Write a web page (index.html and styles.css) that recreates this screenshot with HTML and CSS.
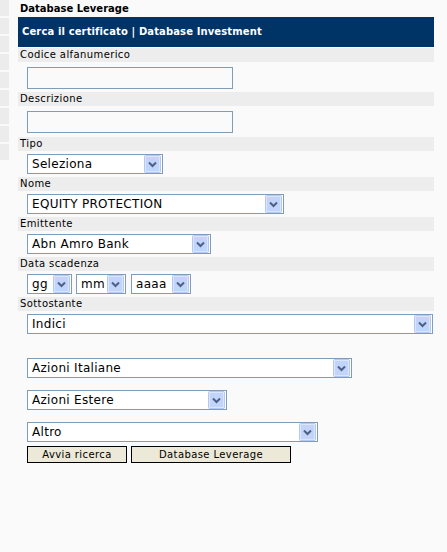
FILE: index.html
```html
<!DOCTYPE html>
<html>
<head>
<meta charset="utf-8">
<link rel="stylesheet" href="styles.css">
</head>
<body>
<div class="page">
  <div class="side">
    <div class="side-item"></div><div class="side-item"></div><div class="side-item"></div>
    <div class="side-item"></div><div class="side-item"></div><div class="side-item"></div>
    <div class="side-item"></div><div class="side-item"></div><div class="side-item"></div>
  </div>
  <div class="main">
    <div class="title">Database Leverage</div>
    <div class="header">Cerca il certificato | Database Investment</div>

    <div class="band">Codice alfanumerico</div>
    <div class="ctl ctl-input"><div class="input"></div></div>

    <div class="band">Descrizione</div>
    <div class="ctl ctl-input2"><div class="input"></div></div>

    <div class="band">Tipo</div>
    <div class="ctl"><div class="select w-tipo"><span>Seleziona</span><svg class="arrow" width="17" height="18" viewBox="0 0 17 18"><rect x="0.5" y="0.5" width="16" height="17" rx="1" fill="#c3d4fb" stroke="#b4c8f4"/><rect x="1.5" y="1.5" width="14" height="15" fill="none" stroke="#dbe6fd"/><path d="M5 7.5 L8.5 11 L12 7.5" fill="none" stroke="#4d6185" stroke-width="2"/></svg></div></div>

    <div class="band">Nome</div>
    <div class="ctl"><div class="select w-nome"><span>EQUITY PROTECTION</span><svg class="arrow" width="17" height="18" viewBox="0 0 17 18"><rect x="0.5" y="0.5" width="16" height="17" rx="1" fill="#c3d4fb" stroke="#b4c8f4"/><rect x="1.5" y="1.5" width="14" height="15" fill="none" stroke="#dbe6fd"/><path d="M5 7.5 L8.5 11 L12 7.5" fill="none" stroke="#4d6185" stroke-width="2"/></svg></div></div>

    <div class="band">Emittente</div>
    <div class="ctl"><div class="select w-emit"><span>Abn Amro Bank</span><svg class="arrow" width="17" height="18" viewBox="0 0 17 18"><rect x="0.5" y="0.5" width="16" height="17" rx="1" fill="#c3d4fb" stroke="#b4c8f4"/><rect x="1.5" y="1.5" width="14" height="15" fill="none" stroke="#dbe6fd"/><path d="M5 7.5 L8.5 11 L12 7.5" fill="none" stroke="#4d6185" stroke-width="2"/></svg></div></div>

    <div class="band">Data scadenza</div>
    <div class="ctl date-row">
      <div class="select w-gg"><span>gg</span><svg class="arrow" width="17" height="18" viewBox="0 0 17 18"><rect x="0.5" y="0.5" width="16" height="17" rx="1" fill="#c3d4fb" stroke="#b4c8f4"/><rect x="1.5" y="1.5" width="14" height="15" fill="none" stroke="#dbe6fd"/><path d="M5 7.5 L8.5 11 L12 7.5" fill="none" stroke="#4d6185" stroke-width="2"/></svg></div>
      <div class="select w-mm"><span>mm</span><svg class="arrow" width="17" height="18" viewBox="0 0 17 18"><rect x="0.5" y="0.5" width="16" height="17" rx="1" fill="#c3d4fb" stroke="#b4c8f4"/><rect x="1.5" y="1.5" width="14" height="15" fill="none" stroke="#dbe6fd"/><path d="M5 7.5 L8.5 11 L12 7.5" fill="none" stroke="#4d6185" stroke-width="2"/></svg></div>
      <div class="select w-aaaa"><span>aaaa</span><svg class="arrow" width="17" height="18" viewBox="0 0 17 18"><rect x="0.5" y="0.5" width="16" height="17" rx="1" fill="#c3d4fb" stroke="#b4c8f4"/><rect x="1.5" y="1.5" width="14" height="15" fill="none" stroke="#dbe6fd"/><path d="M5 7.5 L8.5 11 L12 7.5" fill="none" stroke="#4d6185" stroke-width="2"/></svg></div>
    </div>

    <div class="band">Sottostante</div>
    <div class="ctl"><div class="select w-indici"><span>Indici</span><svg class="arrow" width="17" height="18" viewBox="0 0 17 18"><rect x="0.5" y="0.5" width="16" height="17" rx="1" fill="#c3d4fb" stroke="#b4c8f4"/><rect x="1.5" y="1.5" width="14" height="15" fill="none" stroke="#dbe6fd"/><path d="M5 7.5 L8.5 11 L12 7.5" fill="none" stroke="#4d6185" stroke-width="2"/></svg></div></div>

    <div class="ctl ctl-first"><div class="select w-ita"><span>Azioni Italiane</span><svg class="arrow" width="17" height="18" viewBox="0 0 17 18"><rect x="0.5" y="0.5" width="16" height="17" rx="1" fill="#c3d4fb" stroke="#b4c8f4"/><rect x="1.5" y="1.5" width="14" height="15" fill="none" stroke="#dbe6fd"/><path d="M5 7.5 L8.5 11 L12 7.5" fill="none" stroke="#4d6185" stroke-width="2"/></svg></div></div>
    <div class="ctl ctl-next"><div class="select w-est"><span>Azioni Estere</span><svg class="arrow" width="17" height="18" viewBox="0 0 17 18"><rect x="0.5" y="0.5" width="16" height="17" rx="1" fill="#c3d4fb" stroke="#b4c8f4"/><rect x="1.5" y="1.5" width="14" height="15" fill="none" stroke="#dbe6fd"/><path d="M5 7.5 L8.5 11 L12 7.5" fill="none" stroke="#4d6185" stroke-width="2"/></svg></div></div>
    <div class="ctl ctl-next"><div class="select w-altro"><span>Altro</span><svg class="arrow" width="17" height="18" viewBox="0 0 17 18"><rect x="0.5" y="0.5" width="16" height="17" rx="1" fill="#c3d4fb" stroke="#b4c8f4"/><rect x="1.5" y="1.5" width="14" height="15" fill="none" stroke="#dbe6fd"/><path d="M5 7.5 L8.5 11 L12 7.5" fill="none" stroke="#4d6185" stroke-width="2"/></svg></div></div>

    <div class="buttons">
      <div class="btn w-btn1">Avvia ricerca</div>
      <div class="btn w-btn2">Database Leverage</div>
    </div>
  </div>
</div>
</body>
</html>
```

FILE: styles.css
```css
html, body {
  margin: 0;
  padding: 0;
  background: #fafafa;
}
body {
  width: 447px;
  height: 552px;
  overflow: hidden;
  font-family: "DejaVu Sans", Verdana, sans-serif;
  color: #000;
}
.page {
  display: flex;
  align-items: flex-start;
  gap: 9px;
}
.side {
  width: 9px;
  display: flex;
  flex-direction: column;
  gap: 2px;
}
.side-item {
  height: 16px;
  background: #ececec;
}
.main {
  width: 416px;
}
.title {
  height: 17px;
  line-height: 17px;
  padding-left: 2px;
  font-size: 10px;
  font-weight: bold;
}
.header {
  height: 30px;
  line-height: 30px;
  margin-bottom: 1px;
  padding-left: 4px;
  background: #003366;
  color: #fff;
  font-size: 10px;
  font-weight: bold;
  letter-spacing: 0.12px;
}
.band {
  height: 14px;
  line-height: 14px;
  padding-left: 2px;
  background: #ededed;
  font-size: 10px;
  letter-spacing: 0.4px;
}
.ctl {
  padding: 3px 0 3px 9px;
}
.ctl-input {
  padding: 5px 0 3px 9px;
}
.ctl-input2 {
  padding: 5px 0 4px 9px;
}
.ctl-first {
  padding: 21px 0 0 9px;
}
.ctl-next {
  padding: 12px 0 0 9px;
}
.input {
  width: 204px;
  height: 20px;
  border: 1px solid #7f9db9;
  background: #fafafa;
}
.select {
  box-sizing: border-box;
  height: 20px;
  border: 1px solid #7f9db9;
  background: #fff;
  display: flex;
  align-items: center;
  justify-content: space-between;
  padding-left: 4px;
  padding-right: 1px;
  font-size: 12px;
  letter-spacing: 0.3px;
}
.arrow {
  display: block;
  flex: none;
}
.date-row {
  display: flex;
  gap: 4px;
}
.w-tipo { width: 136px; }
.w-nome { width: 257px; }
.w-emit { width: 184px; }
.w-gg { width: 45px; }
.w-mm { width: 50px; }
.w-aaaa { width: 60px; margin-left: 1px; }
.w-indici { width: 406px; }
.w-ita { width: 325px; }
.w-est { width: 200px; }
.w-altro { width: 291px; }
.buttons {
  display: flex;
  gap: 4px;
  padding: 4px 0 0 9px;
}
.btn {
  box-sizing: border-box;
  height: 17px;
  line-height: 15px;
  border: 1px solid #000;
  background: #ece9d8;
  text-align: center;
  font-size: 10px;
  letter-spacing: 0.4px;
}
.w-btn1 { width: 100px; }
.w-btn2 { width: 160px; }
```
